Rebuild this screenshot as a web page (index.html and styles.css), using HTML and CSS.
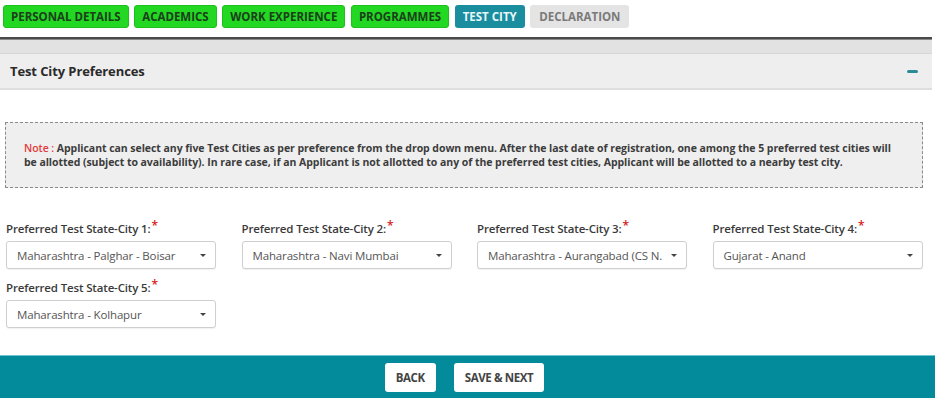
FILE: index.html
```html
<!DOCTYPE html>
<html>
<head>
<meta charset="utf-8">
<link rel="stylesheet" href="styles.css">
</head>
<body>
<div class="page">
  <nav class="tabs">
    <span class="tab done">PERSONAL DETAILS</span>
    <span class="tab done">ACADEMICS</span>
    <span class="tab done">WORK EXPERIENCE</span>
    <span class="tab done">PROGRAMMES</span>
    <span class="tab active">TEST CITY</span>
    <span class="tab pending">DECLARATION</span>
  </nav>
  <div class="rule"></div>
  <div class="band"></div>
  <div class="panel-head">
    <span class="panel-title">Test City Preferences</span>
    <span class="collapse"></span>
  </div>
  <div class="content">
    <div class="note">
      <p><span class="note-label">Note :</span> Applicant can select any five Test Cities as per preference from the drop down menu. After the last date of registration, one among the 5 preferred test cities will be allotted (subject to availability). In rare case, if an Applicant is not allotted to any of the preferred test cities, Applicant will be allotted to a nearby test city.</p>
    </div>
    <div class="form-grid">
      <div class="field">
        <label>Preferred Test State-City 1:<span class="req">*</span></label>
        <div class="select"><span class="val">Maharashtra - Palghar - Boisar</span><span class="caret"></span></div>
      </div>
      <div class="field">
        <label>Preferred Test State-City 2:<span class="req">*</span></label>
        <div class="select"><span class="val">Maharashtra - Navi Mumbai</span><span class="caret"></span></div>
      </div>
      <div class="field">
        <label>Preferred Test State-City 3:<span class="req">*</span></label>
        <div class="select"><span class="val">Maharashtra - Aurangabad (CS N.</span><span class="caret"></span></div>
      </div>
      <div class="field">
        <label>Preferred Test State-City 4:<span class="req">*</span></label>
        <div class="select"><span class="val">Gujarat - Anand</span><span class="caret"></span></div>
      </div>
      <div class="field">
        <label>Preferred Test State-City 5:<span class="req">*</span></label>
        <div class="select"><span class="val">Maharashtra - Kolhapur</span><span class="caret"></span></div>
      </div>
    </div>
  </div>
  <footer class="actions">
    <button class="btn">BACK</button>
    <button class="btn">SAVE &amp; NEXT</button>
  </footer>
</div>
</body>
</html>
```

FILE: styles.css
```css
* { box-sizing: border-box; }
html, body { margin: 0; padding: 0; background: #fff; }
body { font-family: "Open Sans", "Noto Sans", sans-serif; color: #333; }
.page { width: 935px; }

.tabs { display: flex; gap: 5.5px; padding: 5px 0 0 3px; height: 37px; }
.tab {
  height: 23px; padding: 0 7px; border-radius: 3px;
  font-size: 11.5px; font-weight: 700; line-height: 23px;
  letter-spacing: 0; white-space: nowrap;
}
.tab.done { background: #22d822; border: 1px solid #1ec01e; color: #1b401b; line-height: 21px; }
.tab.active { background: #1a8d9e; color: #e8f7fa; padding: 0 8px; }
.tab.pending { background: #e4e4e4; color: #7a7a7a; padding: 0 9px; }

.rule { height: 3px; background: #4a4a4a; border-bottom: 1px solid #888; width: 932px; }
.band { height: 13px; background: #e2e2e2; width: 932px; }
.panel-head {
  display: flex; align-items: center; justify-content: space-between;
  height: 37px; background: #eeeeee; width: 932px;
  border-top: 1px solid #d6d6d6; border-bottom: 2px solid #dedede;
  padding: 0 14px 0 10px;
}
.panel-title { font-size: 13px; font-weight: 700; color: #2a2a2a; letter-spacing: -0.1px; }
.collapse { width: 11px; height: 3px; background: #2b8c97; border-radius: 2px; }

.content { padding: 32px 0 0 5px; }
.note {
  width: 918px; height: 66px; background: #efefef;
  border: 1px dashed #8a8a8a;
  padding: 18px 26px 0 18px;
}
.note p { margin: 0; font-size: 10.5px; font-weight: 700; line-height: 14px; color: #3c3c3c; letter-spacing: -0.05px; }
.note-label { color: #e23b3b; font-weight: 600; }

.form-grid {
  display: grid; grid-template-columns: repeat(4, 210px);
  column-gap: 25.5px; row-gap: 9px; margin: 31px 0 0 1px;
}
.field label {
  display: block; font-size: 11.5px; font-weight: 600; color: #3a3a3a;
  line-height: 14px; margin-bottom: 5px; letter-spacing: -0.15px; white-space: nowrap;
}
.req { color: #d42020; font-size: 12px; vertical-align: 3px; margin-left: 1px; }
.select {
  display: flex; align-items: center; justify-content: space-between;
  height: 28px; border: 1px solid #cfcfcf; border-radius: 3px; background: #fff;
  padding: 0 9px 0 10px; box-shadow: 0 1px 1px rgba(0,0,0,0.06);
}
.val { font-size: 11.5px; color: #555; white-space: nowrap; letter-spacing: -0.15px; }
.caret { width: 0; height: 0; border-left: 3px solid transparent; border-right: 3px solid transparent; border-top: 3px solid #444; flex: none; margin-left: 4px; }

.actions {
  margin-top: 27px; height: 43px; background: #038b9c;
  border-top: 1px solid #6cc4cf;
  display: flex; justify-content: center; align-items: center; gap: 18px;
  padding-right: 6px;
}
.btn {
  height: 29px; border: none; border-radius: 3px; background: #fff;
  font-family: "Open Sans", sans-serif; font-size: 11.5px; font-weight: 700; color: #444;
  padding: 0 11px; letter-spacing: -0.4px;
}
```
